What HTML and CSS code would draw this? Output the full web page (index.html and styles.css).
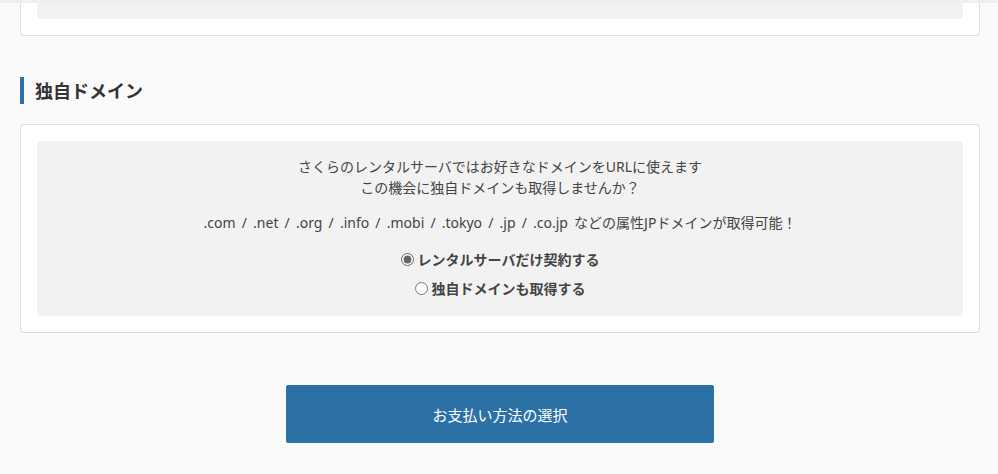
FILE: index.html
```html
<!DOCTYPE html>
<html lang="ja">
<head>
  <meta charset="UTF-8" />
  <meta name="viewport" content="width=device-width, initial-scale=1.0"/>
  <title>独自ドメイン</title>
  <link rel="stylesheet" href="styles.css">
</head>
<body>
  <div class="top-shadow"></div>

  <div class="wrap">
    <div class="card card-prev">
      <div class="card-inner card-inner-prev"></div>
    </div>

    <h2 class="section-title">独自ドメイン</h2>

    <div class="card">
      <div class="card-inner">
        <p class="lead">さくらのレンタルサーバではお好きなドメインをURLに使えます<br>この機会に独自ドメインも取得しませんか？</p>
        <p class="tlds">.com / .net / .org / .info / .mobi / .tokyo / .jp / .co.jp などの属性JPドメインが取得可能！</p>
        <ul class="choices">
          <li><label><input type="radio" name="domain" checked>レンタルサーバだけ契約する</label></li>
          <li><label><input type="radio" name="domain">独自ドメインも取得する</label></li>
        </ul>
      </div>
    </div>

    <div class="actions">
      <button class="btn-next">お支払い方法の選択</button>
    </div>
  </div>
</body>
</html>
```

FILE: styles.css
```css
body {
  margin: 0;
  background: #fafafa;
  color: #444;
  font-family: "Noto Sans", "Noto Sans CJK JP", sans-serif;
  font-size: 14px;
}

.top-shadow {
  height: 3px;
  background: #efefef;
}

.wrap {
  padding: 0 18px 0 20px;
}

.card {
  background: #fff;
  border: 1px solid #ddd;
  border-radius: 3px;
  padding: 16px;
}

.card-prev {
  border-top: none;
  border-radius: 0 0 3px 3px;
  padding-top: 0;
}

.card-inner {
  background: #f2f2f2;
  border-radius: 4px;
  padding: 15px 10px 17px;
  text-align: center;
}

.card-inner-prev {
  height: 16px;
  padding: 0;
  border-radius: 0 0 4px 4px;
}

.section-title {
  margin: 41px 0 20px;
  padding-left: 11px;
  border-left: 4px solid #2c6fa6;
  font-family: "Noto Sans CJK JP", sans-serif;
  font-size: 18px;
  line-height: 27px;
  color: #333;
}

.lead {
  margin: 0;
  line-height: 21px;
}

.tlds {
  margin: 14px 0 0;
  line-height: 21px;
  word-spacing: 2.5px;
}

.choices {
  list-style: none;
  margin: 16px 0 0;
  padding: 0;
  font-weight: bold;
}

.choices li {
  display: flex;
  justify-content: center;
  height: 21px;
}

.choices li + li {
  margin-top: 8px;
}

.choices label {
  display: flex;
  align-items: center;
  line-height: 21px;
  cursor: pointer;
}

.choices input {
  width: 13px;
  height: 13px;
  margin: 0 4px 0 0;
  accent-color: #666;
}

.actions {
  display: flex;
  justify-content: center;
  padding: 52px 0 30px;
}

.btn-next {
  width: 428px;
  height: 58px;
  border: none;
  border-radius: 2px;
  background: #2c71a6;
  color: #fff;
  font-family: inherit;
  font-size: 15px;
  cursor: pointer;
}

.btn-next:hover {
  background: #245f8d;
}
```
